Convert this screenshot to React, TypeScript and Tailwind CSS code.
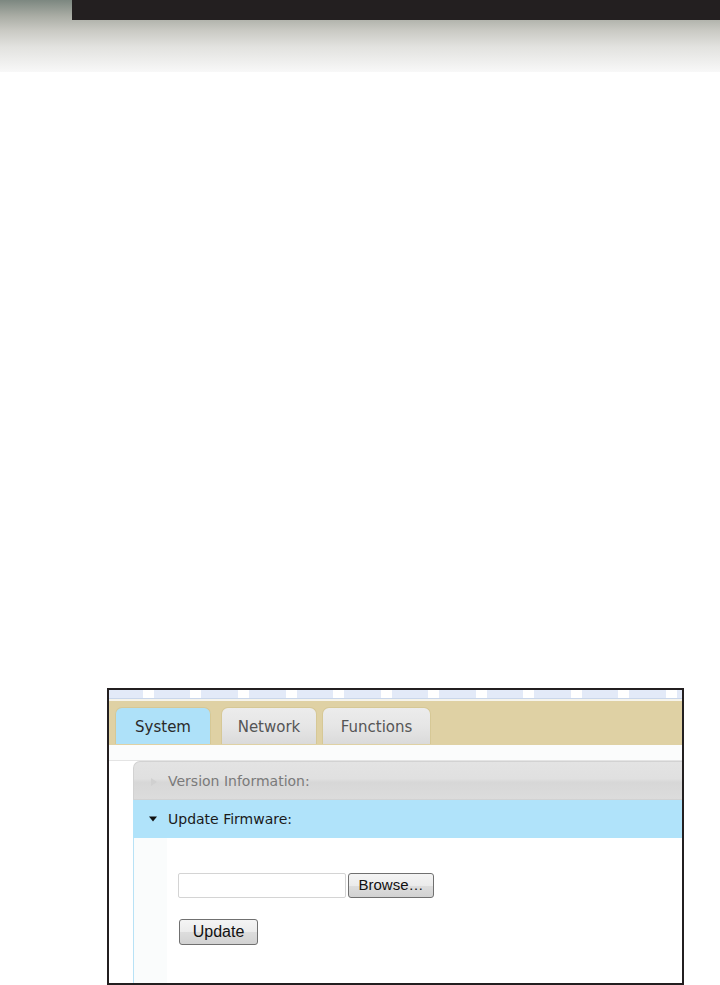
import React from "react";

export default function App() {
  return (
    <div className="w-[720px] h-[985px] bg-white overflow-hidden flex flex-col">
      {/* header band */}
      <div className="h-[72px] shrink-0 bg-[linear-gradient(to_bottom,#7c8780_0%,#a9aca4_22%,#c9c9c3_42%,#e2e2df_65%,#f8f8f8_100%)]">
        <div className="ml-[72px] h-[20px] bg-[#231f20]" />
      </div>

      {/* screenshot frame */}
      <div className="mt-[616px] ml-[107px] w-[577px] h-[297px] shrink-0 border-2 border-[#231f20] flex flex-col overflow-hidden bg-white">
        {/* browser strip */}
        <div className="h-[8px] shrink-0 bg-[repeating-linear-gradient(90deg,#e3eaf8_0px,#e3eaf8_34px,#ffffff_34px,#ffffff_45px,#e3eaf8_45px,#e3eaf8_47.5px)]" />
        <div className="h-[1px] shrink-0 bg-[#c9d6ea]" />
        <div className="h-[2px] shrink-0 bg-[#f6f4ec]" />
        {/* tab bar */}
        <div className="h-[44px] shrink-0 bg-[#dfd1a4] flex items-end pl-[6px] pb-[1px]">
          <div className="w-[96px] h-[37px] pt-[2px] rounded-t-[7px] bg-[#aee1f9] border border-[#d6c896] border-b-0 flex items-center justify-center text-[15px] text-[#2a2a2a] font-['DejaVu_Sans',Verdana,sans-serif]">
            System
          </div>
          <div className="ml-[10px] w-[96px] h-[37px] pt-[2px] rounded-t-[7px] bg-[linear-gradient(to_bottom,#ececec_0%,#e6e6e6_50%,#dadada_100%)] border border-[#d6c896] border-b-0 flex items-center justify-center text-[15px] text-[#555] font-['DejaVu_Sans',Verdana,sans-serif]">
            Network
          </div>
          <div className="ml-[5px] w-[109px] h-[37px] pt-[2px] rounded-t-[7px] bg-[linear-gradient(to_bottom,#ececec_0%,#e6e6e6_50%,#dadada_100%)] border border-[#d6c896] border-b-0 flex items-center justify-center text-[15px] text-[#555] font-['DejaVu_Sans',Verdana,sans-serif]">
            Functions
          </div>
        </div>
        <div className="h-[16px] shrink-0 bg-[#fbfcfc] border-b border-[#e4e4e4]" />
        {/* accordion */}
        <div className="pl-[24px] flex-1 flex flex-col bg-white">
          <div className="h-[39px] shrink-0 pt-[2px] rounded-tl-[7px] bg-[linear-gradient(to_bottom,#e3e3e3_0%,#e0e0e0_45%,#d7d7d7_55%,#dcdcdc_100%)] border border-r-0 border-[#d2d2d2] flex items-center">
            <svg width="8" height="10" viewBox="0 0 8 10" className="ml-[16px]">
              <path d="M1 1 L7 5 L1 9 Z" fill="#d0d0d0" />
            </svg>
            <span className="ml-[10px] text-[14px] text-[#7a7a7a] font-['DejaVu_Sans',Verdana,sans-serif]">
              Version Information:
            </span>
          </div>
          <div className="h-[38px] shrink-0 bg-[#b0e3fa] flex items-center">
            <svg width="10" height="8" viewBox="0 0 10 8" className="ml-[15px]">
              <path d="M1 1.5 L9 1.5 L5 6.5 Z" fill="#111" />
            </svg>
            <span className="ml-[10px] text-[14px] text-[#1a1a1a] font-['DejaVu_Sans',Verdana,sans-serif]">
              Update Firmware:
            </span>
          </div>
          <div className="flex-1 flex border-l border-[#b8e2f6]">
            <div className="w-[33px] bg-[#fafcfc]" />
            <div className="flex-1 bg-white pl-[11px] pt-[35px] flex flex-col">
              <div className="flex items-center">
                <div className="w-[168px] h-[25px] border border-[#d4d4d4] rounded-[2px] bg-white" />
                <div className="ml-[2px] w-[86px] h-[25px] rounded-[3px] border border-[#707070] bg-[linear-gradient(to_bottom,#f4f4f4_0%,#ebebeb_50%,#dddddd_51%,#d2d2d2_100%)] flex items-center justify-center text-[15px] text-[#111] font-['Liberation_Sans',Arial,sans-serif]">
                  Browse…
                </div>
              </div>
              <div className="mt-[21px] ml-[1px] w-[79px] h-[26px] rounded-[3px] border border-[#707070] bg-[linear-gradient(to_bottom,#f4f4f4_0%,#ebebeb_50%,#dddddd_51%,#d2d2d2_100%)] flex items-center justify-center text-[16px] text-[#111] font-['Liberation_Sans',Arial,sans-serif]">
                Update
              </div>
            </div>
          </div>
        </div>
      </div>
    </div>
  );
}
